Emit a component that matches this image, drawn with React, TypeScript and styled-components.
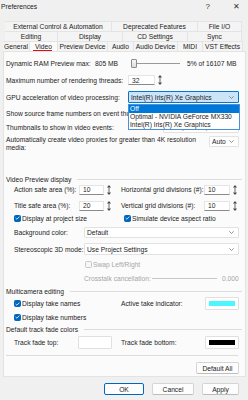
import React from 'react'
import styled, { createGlobalStyle } from 'styled-components'

const GlobalStyle = createGlobalStyle`
    html, body {
        margin: 0;
        padding: 0;
        background: #f0f0f0;
    }
    body {
        font-family: 'Liberation Sans', Arial, sans-serif;
        font-size: 6.7px;
        color: #1b1b1b;
    }
`

const Window = styled.div`
    width: 248px;
    height: 400px;
    background: #f0f0f0;
    display: flex;
    flex-direction: column;
    overflow: hidden;
`

const TitleBar = styled.div`
    height: 13px;
    display: flex;
    align-items: center;
    padding: 0 8px 0 1px;
    font-size: 6.7px;
`

const TitleText = styled.span`
    flex: 1;
`

const TitleButtons = styled.div`
    display: flex;
    gap: 23px;
    font-size: 8px;
    color: #333;
`

const TabStrip = styled.div`
    margin-top: 8px;
    display: flex;
    flex-direction: column;
`

const TabRow = styled.div<{ $indent: number }>`
    display: flex;
    height: 10px;
    padding-left: ${({ $indent }) => $indent}px;
`

const Tab = styled.div<{ $w: number; $active?: boolean }>`
    width: ${({ $w }) => $w}px;
    box-sizing: border-box;
    display: flex;
    align-items: center;
    justify-content: center;
    background: ${({ $active }) => ($active ? '#fbfbfb' : '#f4f4f4')};
    border-right: 1px solid #e4e4e4;
    border-top: 1px solid #e4e4e4;
    position: relative;
    white-space: nowrap;

    ${({ $active }) =>
        $active &&
        `
        &::after {
            content: '';
            position: absolute;
            left: 3px;
            right: 5px;
            bottom: 0;
            height: 1.5px;
            background: #e01010;
        }
    `}
`

const Panel = styled.div`
    position: relative;
    margin-left: 3px;
    width: 243px;
    height: 326px;
    box-sizing: border-box;
    background: #fbfbfb;
    border: 1px solid #e3e3e3;
    display: flex;
    flex-direction: column;
`

const Section = styled.div<{ $indent: number }>`
    display: flex;
    flex-direction: column;
    padding-left: ${({ $indent }) => $indent}px;
`

const Row = styled.div<{ $h: number; $mt: number; $top?: boolean }>`
    display: flex;
    align-items: ${({ $top }) => ($top ? 'flex-start' : 'center')};
    height: ${({ $h }) => $h}px;
    margin-top: ${({ $mt }) => $mt}px;
    white-space: nowrap;
`

const Label = styled.span<{ $w?: number; $disabled?: boolean; $clip?: boolean }>`
    ${({ $w }) => ($w ? `width: ${$w}px; flex: none;` : '')}
    ${({ $clip }) => ($clip ? 'overflow: hidden;' : '')}
    color: ${({ $disabled }) => ($disabled ? '#a6a6a6' : '#1b1b1b')};
`

const WrapLabel = styled.span`
    width: 200px;
    white-space: normal;
    line-height: 8px;
    flex: none;
`

const Half = styled.div<{ $w: number }>`
    width: ${({ $w }) => $w}px;
    display: flex;
    align-items: center;
    flex: none;
`

const SpinBox = styled.div<{ $w: number }>`
    width: ${({ $w }) => $w}px;
    height: 10px;
    box-sizing: border-box;
    background: #fff;
    border: 1px solid #e5e5e5;
    border-bottom-color: #8a8a8a;
    padding-left: 3px;
    display: flex;
    align-items: center;
    flex: none;
`

const SpinArrows = styled.svg`
    margin-left: 3px;
    flex: none;
`

const Select = styled.div<{ $w: number; $h?: number; $focused?: boolean }>`
    width: ${({ $w }) => $w}px;
    height: ${({ $h }) => $h ?? 12}px;
    box-sizing: border-box;
    background: ${({ $focused }) => ($focused ? '#cce4f7' : '#fff')};
    border: 1px solid ${({ $focused }) => ($focused ? '#0078d4' : '#e2e2e2')};
    border-radius: 1px;
    padding: 0 4px 0 2px;
    display: flex;
    align-items: center;
    justify-content: space-between;
    flex: none;
    overflow: hidden;
`

const Chevron = () => (
    <svg width='5' height='3' viewBox='0 0 5 3'>
        <path d='M0.3 0.3 L2.5 2.5 L4.7 0.3' fill='none' stroke='#6a6a6a' strokeWidth='0.7' />
    </svg>
)

const Spinner = () => (
    <SpinArrows width='4' height='10' viewBox='0 0 4 10'>
        <path d='M2 0 L4 2.5 L0 2.5 Z' fill='#444' />
        <rect x='1.6' y='2.5' width='0.8' height='5' fill='#444' />
        <path d='M2 10 L4 7.5 L0 7.5 Z' fill='#444' />
    </SpinArrows>
)

const DropList = styled.div`
    position: absolute;
    left: 124px;
    top: 52px;
    width: 112px;
    box-sizing: border-box;
    background: #fff;
    border: 1px solid #4a90d9;
    display: flex;
    flex-direction: column;
    z-index: 2;
`

const Option = styled.div<{ $selected?: boolean }>`
    height: 8px;
    line-height: 8px;
    padding-left: 1px;
    background: ${({ $selected }) => ($selected ? '#0078d7' : 'transparent')};
    color: ${({ $selected }) => ($selected ? '#fff' : '#1b1b1b')};
`

const Slider = styled.div<{ $w: number; $disabled?: boolean }>`
    width: ${({ $w }) => $w}px;
    height: 9px;
    display: flex;
    align-items: center;
    flex: none;
`

const Thumb = styled.div`
    width: 6px;
    height: 9px;
    box-sizing: border-box;
    border: 1px solid #8c8c8c;
    border-radius: 1px;
    background: linear-gradient(#f6f6f6, #dcdcdc);
    flex: none;
`

const Track = styled.div<{ $disabled?: boolean }>`
    flex: 1;
    height: 1px;
    background: ${({ $disabled }) => ($disabled ? '#c8c8c8' : '#9a9a9a')};
`

const GroupHeader = styled.div<{ $mt: number; $lineGap: number }>`
    display: flex;
    align-items: center;
    height: 8px;
    margin-top: ${({ $mt }) => $mt}px;
    padding-left: 2px;
    padding-right: 3px;
    white-space: nowrap;

    &::after {
        content: '';
        flex: 1;
        margin-left: ${({ $lineGap }) => $lineGap}px;
        height: 1px;
        background: #dcdcdc;
    }
`

const CheckBox = styled.span<{ $checked?: boolean; $disabled?: boolean }>`
    width: 7px;
    height: 7px;
    box-sizing: border-box;
    border-radius: 1.5px;
    margin-right: 1px;
    background: ${({ $checked }) => ($checked ? '#0067c0' : '#f7f7f7')};
    border: 1px solid ${({ $checked, $disabled }) => ($checked ? '#0067c0' : $disabled ? '#c6c6c6' : '#8a8a8a')};
    display: flex;
    align-items: center;
    justify-content: center;
    flex: none;
`

const Check = ({ checked, disabled }: { checked?: boolean; disabled?: boolean }) => (
    <CheckBox $checked={checked} $disabled={disabled}>
        {checked && (
            <svg width='5' height='4' viewBox='0 0 5 4'>
                <path d='M0.6 2 L1.9 3.2 L4.4 0.6' fill='none' stroke='#fff' strokeWidth='0.8' />
            </svg>
        )}
    </CheckBox>
)

const Swatch = styled.div<{ $color: string }>`
    width: 34px;
    height: 13px;
    box-sizing: border-box;
    background: #fff;
    border: 1px solid #e0e0e0;
    border-radius: 1px;
    padding: 3px 3px;
    flex: none;

    &::before {
        content: '';
        display: block;
        width: 100%;
        height: 100%;
        background: ${({ $color }) => $color};
    }
`

const Separator = styled.div`
    margin: 7px 7px 0 2px;
    height: 1px;
    background: #dcdcdc;
`

const Button = styled.button<{ $primary?: boolean; $w: number }>`
    width: ${({ $w }) => $w}px;
    height: 12px;
    padding: 0;
    box-sizing: border-box;
    font-family: inherit;
    font-size: 6.7px;
    color: #1b1b1b;
    background: #fdfdfd;
    border: 1px solid ${({ $primary }) => ($primary ? '#0067c0' : '#d5d5d5')};
    border-bottom-color: ${({ $primary }) => ($primary ? '#0067c0' : '#bdbdbd')};
    border-radius: 2px;
    flex: none;
`

const RightAlign = styled.div`
    display: flex;
    justify-content: flex-end;
    padding-right: 6px;
    margin-top: 6px;
`

const Footer = styled.div`
    display: flex;
    justify-content: flex-end;
    gap: 8px;
    padding: 6px 9px 0 0;
`

const Spacer = styled.span<{ $w: number }>`
    width: ${({ $w }) => $w}px;
    flex: none;
`

const App = () => {
    return (
        <>
            <GlobalStyle />
            <Window>
                <TitleBar>
                    <TitleText>Preferences</TitleText>
                    <TitleButtons>
                        <span>?</span>
                        <span>✕</span>
                    </TitleButtons>
                </TitleBar>

                <TabStrip>
                    <TabRow $indent={5}>
                        <Tab $w={107}>External Control &amp; Automation</Tab>
                        <Tab $w={86}>Deprecated Features</Tab>
                        <Tab $w={44}>File I/O</Tab>
                    </TabRow>
                    <TabRow $indent={5}>
                        <Tab $w={53}>Editing</Tab>
                        <Tab $w={65}>Display</Tab>
                        <Tab $w={65}>CD Settings</Tab>
                        <Tab $w={54}>Sync</Tab>
                    </TabRow>
                    <TabRow $indent={3}>
                        <Tab $w={27}>General</Tab>
                        <Tab $w={28} $active>Video</Tab>
                        <Tab $w={50}>Preview Device</Tab>
                        <Tab $w={26}>Audio</Tab>
                        <Tab $w={44}>Audio Device</Tab>
                        <Tab $w={25}>MIDI</Tab>
                        <Tab $w={40}>VST Effects</Tab>
                    </TabRow>
                </TabStrip>

                <Panel>
                    <Section $indent={2}>
                        <Row $h={12} $mt={5}>
                            <Label $w={89}>Dynamic RAM Preview max:</Label>
                            <Label $w={36}>805 MB</Label>
                            <Slider $w={49}>
                                <Thumb />
                                <Track />
                            </Slider>
                            <Spacer $w={7} />
                            <Label>5% of 16107 MB</Label>
                        </Row>
                        <Row $h={12} $mt={5}>
                            <Label $w={122}>Maximum number of rendering threads:</Label>
                            <SpinBox $w={27}>32</SpinBox>
                            <Spinner />
                        </Row>
                        <Row $h={12} $mt={5}>
                            <Label $w={122}>GPU acceleration of video processing:</Label>
                            <Select $w={111} $focused>
                                <span>Intel(R) Iris(R) Xe Graphics</span>
                                <Chevron />
                            </Select>
                        </Row>
                        <Row $h={12} $mt={4}>
                            <Label $w={122} $clip>Show source frame numbers on event thumbnails as:</Label>
                        </Row>
                        <Row $h={12} $mt={2}>
                            <Label $w={157}>Thumbnails to show in video events:</Label>
                            <Select $w={76} $h={11}>
                                <span>Head, Center, Tail</span>
                                <Chevron />
                            </Select>
                        </Row>
                        <Row $h={16} $mt={3} $top>
                            <WrapLabel>Automatically create video proxies for greater than 4K resolution media:</WrapLabel>
                            <Spacer $w={3} />
                            <Select $w={30} $h={11}>
                                <span>Auto</span>
                                <Chevron />
                            </Select>
                        </Row>
                    </Section>

                    <DropList>
                        <Option $selected>Off</Option>
                        <Option>Optimal - NVIDIA GeForce MX330</Option>
                        <Option>Intel(R) Iris(R) Xe Graphics</Option>
                    </DropList>

                    <GroupHeader $mt={23} $lineGap={6}>Video Preview display</GroupHeader>
                    <Section $indent={10}>
                        <Row $h={11} $mt={1}>
                            <Half $w={107}>
                                <Label $w={65}>Action safe area (%):</Label>
                                <SpinBox $w={25}>10</SpinBox>
                                <Spinner />
                            </Half>
                            <Label $w={83}>Horizontal grid divisions (#):</Label>
                            <SpinBox $w={26}>10</SpinBox>
                            <Spinner />
                        </Row>
                        <Row $h={11} $mt={5}>
                            <Half $w={107}>
                                <Label $w={65}>Title safe area (%):</Label>
                                <SpinBox $w={25}>20</SpinBox>
                                <Spinner />
                            </Half>
                            <Label $w={83}>Vertical grid divisions (#):</Label>
                            <SpinBox $w={26}>10</SpinBox>
                            <Spinner />
                        </Row>
                        <Row $h={8} $mt={3}>
                            <Half $w={110}>
                                <Check checked />
                                <Label>Display at project size</Label>
                            </Half>
                            <Check checked />
                            <Label>Simulate device aspect ratio</Label>
                        </Row>
                        <Row $h={11} $mt={5}>
                            <Label $w={70}>Background color:</Label>
                            <Select $w={155} $h={11}>
                                <span>Default</span>
                                <Chevron />
                            </Select>
                        </Row>
                        <Row $h={12} $mt={5}>
                            <Label $w={70}>Stereoscopic 3D mode:</Label>
                            <Select $w={155} $h={12}>
                                <span>Use Project Settings</span>
                                <Chevron />
                            </Select>
                        </Row>
                        <Row $h={8} $mt={5}>
                            <Spacer $w={71} />
                            <Check disabled />
                            <Label $disabled>Swap Left/Right</Label>
                        </Row>
                        <Row $h={8} $mt={6}>
                            <Spacer $w={70} />
                            <Label $w={68} $disabled>Crosstalk cancellation:</Label>
                            <Slider $w={65}>
                                <Track $disabled />
                            </Slider>
                            <Spacer $w={5} />
                            <Label $disabled>0.000</Label>
                        </Row>
                    </Section>

                    <GroupHeader $mt={5} $lineGap={6}>Multicamera editing</GroupHeader>
                    <Section $indent={10}>
                        <Row $h={13} $mt={2}>
                            <Half $w={107}>
                                <Check checked />
                                <Label>Display take names</Label>
                            </Half>
                            <Label $w={84}>Active take indicator:</Label>
                            <Swatch $color='#4df5ff' />
                        </Row>
                        <Row $h={8} $mt={3}>
                            <Check checked />
                            <Label>Display take numbers</Label>
                        </Row>
                    </Section>

                    <GroupHeader $mt={4} $lineGap={6}>Default track fade colors</GroupHeader>
                    <Section $indent={10}>
                        <Row $h={12} $mt={3}>
                            <Half $w={107}>
                                <Label $w={64}>Track fade top:</Label>
                                <Swatch $color='#ffffff' />
                            </Half>
                            <Label $w={84}>Track fade bottom:</Label>
                            <Swatch $color='#000000' />
                        </Row>
                    </Section>

                    <Separator />
                    <RightAlign>
                        <Button $w={43}>Default All</Button>
                    </RightAlign>
                </Panel>

                <Footer>
                    <Button $w={40} $primary>OK</Button>
                    <Button $w={42}>Cancel</Button>
                    <Button $w={37}>Apply</Button>
                </Footer>
            </Window>
        </>
    )
}

export default App
